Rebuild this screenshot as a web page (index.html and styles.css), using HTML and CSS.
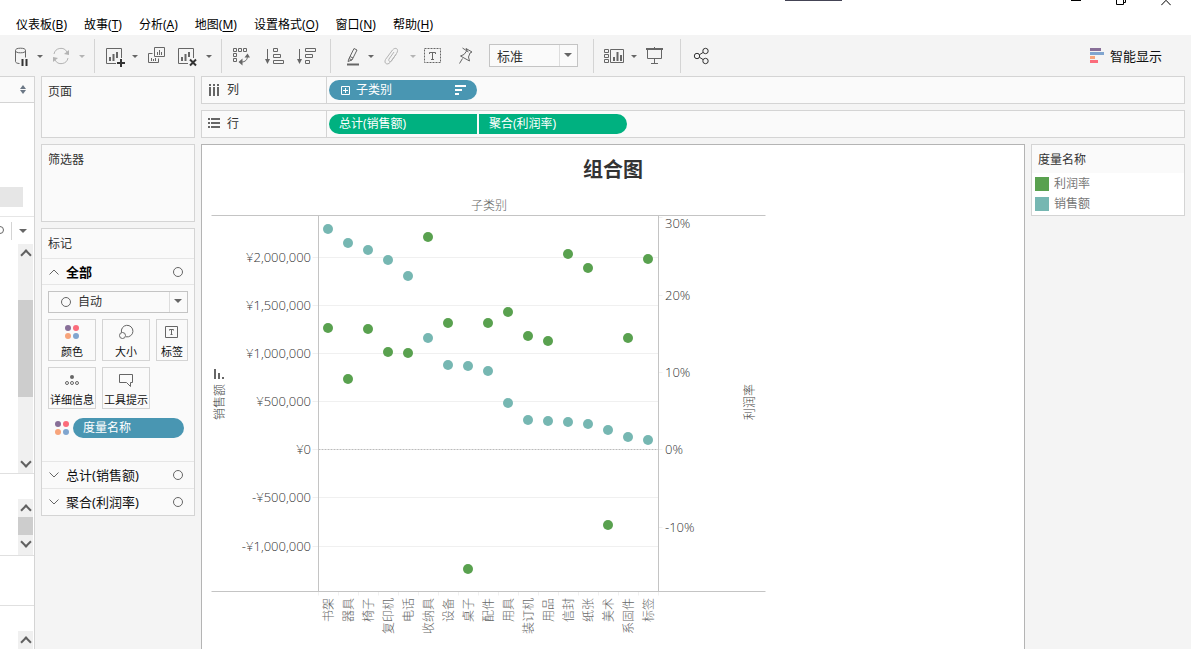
FILE: index.html
```html
<!DOCTYPE html>
<html lang="zh-CN">
	<head>
		<meta charset="UTF-8" />
		<meta name="viewport" content="width=device-width, initial-scale=1.0" />
		<title>组合图</title>
		<link rel="stylesheet" href="styles.css">
	</head>
	<body>
		<header class="titlebar">
			<span class="grip"></span>
			<div class="window-buttons">
				<button aria-label="最小化"><svg width="10" height="6"><path d="M0 .5h10" /></svg></button>
				<button aria-label="还原"><svg width="10" height="6"><path d="M.5 0v4.500h7V0M7.500 2.500h2V0" /></svg></button>
				<button aria-label="关闭"><svg width="10" height="6"><path d="M.3 5.200L5 .3l4.700 4.900" /></svg></button>
			</div>
		</header>
		<nav class="menu">
			<button>仪表板(<u>B</u>)</button>
			<button>故事(<u>T</u>)</button>
			<button>分析(<u>A</u>)</button>
			<button>地图(<u>M</u>)</button>
			<button>设置格式(<u>O</u>)</button>
			<button>窗口(<u>N</u>)</button>
			<button>帮助(<u>H</u>)</button>
		</nav>
		
		<div class="toolbar">
			<div class="group">
				<button class="tool" aria-label="数据源">
					<svg width="24" height="24" viewBox="0 0 24 24">
						<ellipse cx="13.500" cy="6.500" rx="5" ry="2.300" />
						<path d="M8.500 6.500v11c0 1.200 1.800 2 4 2M18.500 6.500v7" />
						<path class="bold" d="M15.500 15v7M19.500 15v7" />
					</svg>
				</button>
				<button class="caret" aria-label="更多"></button>
				<button class="tool" aria-label="刷新" disabled>
					<svg width="24" height="24" viewBox="0 0 24 24">
						<path d="M5 10a7 7 0 0 1 13-2M19 14a7 7 0 0 1-13 2" />
						<path class="solid" d="M20 6v5l-5-1zM4 18v-5l5 1z" />
					</svg>
				</button>
				<button class="caret" aria-label="更多" disabled></button>
			</div>
			<div class="group">
				<button class="tool" aria-label="新建工作表">
					<svg width="24" height="24" viewBox="0 0 24 24">
						<path d="M14 19.500H4.500v-15h15V14" />
						<path class="mid" d="M8 13v4M11.500 10v7M15 8v6" />
						<path class="bold" d="M19 15v8M15 19h8" />
					</svg>
				</button>
				<button class="caret" aria-label="更多"></button>
				<button class="tool" aria-label="复制">
					<svg width="24" height="24" viewBox="0 0 24 24">
						<path d="M10.500 3.500h10v9h-10zM8.500 9.500h-4v9h10v-4" />
						<path d="M13.500 8v3M15.500 6v5M17.500 8v3M7.500 14v3M9.500 15v2M11.500 14v3" />
					</svg>
				</button>
				<button class="tool" aria-label="清除工作表">
					<svg width="24" height="24" viewBox="0 0 24 24">
						<path d="M12 19.500H2.500v-15h15V14" />
						<path class="mid" d="M6 13v4M9.500 10v7M13 8v5" />
						<path class="bold" d="M14 15.500l6 6M20 15.500l-6 6" />
					</svg>
				</button>
				<button class="caret" aria-label="更多"></button>
			</div>
			<div class="group roomy">
				<button class="tool" aria-label="交换行和列">
					<svg width="24" height="24" viewBox="0 0 24 24">
						<path d="M4.500 4.500h3v3h-3zM9.500 4.500h3v3h-3zM14.500 4.500h3v3h-3zM4.500 9.500h3v3h-3zM4.500 14.500h3v3h-3zM18.500 12c0 4-2.500 6-6 6" />
						<path class="solid" d="M15.500 13.500l3-4 2.500 4zM13.500 14.500v7l-4-3.500z" />
					</svg>
				</button>
				<button class="tool" aria-label="升序">
					<svg width="24" height="24" viewBox="0 0 24 24">
						<path d="M6.500 5v13M12.500 4.500h4v3h-4zM12.500 10.500h7v3h-7zM12.500 16.500h10v3h-10z" />
						<path class="solid" d="M4 15h5l-2.500 5z" />
					</svg>
				</button>
				<button class="tool" aria-label="降序">
					<svg width="24" height="24" viewBox="0 0 24 24">
						<path d="M6.500 5v13M12.500 4.500h10v3h-10zM12.500 10.500h7v3h-7zM12.500 16.500h4v3h-4z" />
						<path class="solid" d="M4 15h5l-2.500 5z" />
					</svg>
				</button>
			</div>
			<div class="group roomy">
				<button class="tool" aria-label="突出显示">
					<svg width="24" height="24" viewBox="0 0 24 24">
						<path d="M16 4.500l3 1.500-5 10-3-1.500zM11 14.500l-1 3 4-1.500M12 12.500l3 1.500" />
						<path class="mid" d="M9 20.500h12" />
					</svg>
				</button>
				<button class="caret" aria-label="更多"></button>
				<button class="tool" aria-label="组成员" disabled>
					<svg width="24" height="24" viewBox="0 0 24 24">
						<path d="M14 8l-5 7c-1 2 1 3.500 2.500 2l5-7.500c3-4.500-1-7-4-3.500l-7 9.500c-2 4 2 6 4.500 3l6-8" />
					</svg>
				</button>
				<button class="caret" aria-label="更多" disabled></button>
				<button class="tool" aria-label="显示标记标签">
					<svg width="24" height="24" viewBox="0 0 24 24">
						<rect x="2.500" y="4.500" width="16" height="14" stroke-dasharray="2 1" />
						<path d="M7.500 10V8.500h6V10M10.500 8.500v7M9 15.500h3" />
					</svg>
				</button>
				<button class="tool" aria-label="固定轴">
					<svg width="24" height="24" viewBox="0 0 24 24">
						<path d="M8.500 4l6 4M12 4.500l6 3.500-2 1-1.500 4 1 4-9-5 3.500-1.500L13 6.500zM8.500 14.500l-3 5" />
					</svg>
				</button>
				<div class="picker fit">
					<select aria-label="适合">
						<option>标准</option>
						<option>整个视图</option>
					</select>
				</div>
			</div>
			<div class="group roomy">
				<button class="tool" aria-label="显示/隐藏卡">
					<svg width="24" height="24" viewBox="0 0 24 24">
						<path d="M3.500 5.500h4v3h-4zM3.500 10.500h4v3h-4zM3.500 15.500h4v3h-4zM9.500 5.500h13v13h-13z" />
						<path class="mid" d="M13 13v4M16.500 8v9M20 11v6" />
					</svg>
				</button>
				<button class="caret" aria-label="更多"></button>
				<button class="tool" aria-label="演示模式">
					<svg width="24" height="24" viewBox="0 0 24 24">
						<path d="M4.500 6v8.500h14V6M11.500 15v5M8 19.500h7M11.500 3v2" />
						<path class="mid" d="M3 5h17" />
					</svg>
				</button>
			</div>
			<div class="group">
				<button class="tool" aria-label="共享">
					<svg class="dark" width="24" height="24" viewBox="0 0 24 24">
						<circle cx="9" cy="12" r="2.700" />
						<circle cx="17.500" cy="7" r="2.700" />
						<circle cx="17.500" cy="17" r="2.700" />
						<path d="M11.500 10.700l3.500-2.200M11.500 13.300l3.500 2.200" />
					</svg>
				</button>
			</div>
			<button class="show-me">
				<svg width="14" height="15">
					<path fill="#886f98" d="M0 0h11v3H0z" />
					<path fill="#80a5cf" d="M0 4h14v3H0z" />
					<path fill="#f7a47b" d="M0 8h5v3H0z" />
					<path fill="#fb6c7b" d="M0 12h8v3H0z" />
				</svg>
				智能显示
			</button>
		</div>
		
		<div class="workspace">
			<aside class="data-pane">
				<div class="pane-head">
					<svg width="6" height="9"><path d="M0 4l3-4 3 4zM0 5l3 4 3-4z" /></svg>
				</div>
				<div class="connections"><span class="selected-item"></span></div>
				<div class="search">
					<svg width="4" height="10"><path d="M0 .5a3.500 3.500 0 0 1 0 7" /></svg>
					<button class="caret" aria-label="选项"></button>
				</div>
				<div class="list fields">
					<div class="scroll"><i class="up"></i><i class="thumb"></i><i class="down"></i></div>
				</div>
				<div class="list params">
					<div class="scroll"><i class="up"></i><i class="thumb"></i><i class="down"></i></div>
				</div>
				<div class="list blank"></div>
				<div class="list rest">
					<div class="scroll"><i class="up"></i><i class="thumb"></i></div>
				</div>
			</aside>
			
			<aside class="cards">
				<section class="card pages"><h2>页面</h2></section>
				<section class="card filters"><h2>筛选器</h2></section>
				<section class="card marks">
					<h2>标记</h2>
					<button class="mark-row open">
						<svg width="10" height="6"><path d="M.5 5.500L5 1l4.500 4.500" /></svg>
						<b>全部</b>
						<i class="ring"></i>
					</button>
					<div class="mark-body">
						<div class="picker mark-type">
							<i class="ring"></i>
							<select aria-label="标记类型">
								<option>自动</option>
								<option>圆</option>
							</select>
						</div>
						<div class="mark-buttons">
							<button>
								<svg width="20" height="20" viewBox="0 0 20 20" class="dots">
									<circle fill="#886f98" cx="6" cy="6" r="3" /><circle fill="#fb6c7b" cx="14" cy="6" r="3" />
									<circle fill="#f7a47b" cx="6" cy="14" r="3" /><circle fill="#80a5cf" cx="14" cy="14" r="3" />
								</svg>
								颜色
							</button>
							<button>
								<svg width="20" height="20" viewBox="0 0 20 20">
									<path d="M5.500 10.500a5.800 5.800 0 1 1 4.500 4.300" />
									<circle cx="6.500" cy="13.500" r="3" />
								</svg>
								大小
							</button>
							<button>
								<svg width="20" height="20" viewBox="0 0 20 20">
									<path d="M3.500 4.500h12v11h-12zM7.500 8.500v-1h4v1M9.500 7.500v5M8.500 12.500h2" />
								</svg>
								标签
							</button>
							<button>
								<svg width="20" height="20" viewBox="0 0 20 20">
									<circle class="solid" cx="10" cy="7" r="2" />
									<circle cx="5" cy="13" r="1.500" /><circle cx="10" cy="13" r="1.500" /><circle cx="15" cy="13" r="1.500" />
								</svg>
								详细信息
							</button>
							<button>
								<svg width="20" height="20" viewBox="0 0 20 20">
									<path d="M3.500 4.500h13v8h-2v4l-4-4h-7z" />
								</svg>
								工具提示
							</button>
						</div>
						<div class="mark-pill">
							<svg width="20" height="20" viewBox="0 0 20 20" class="dots">
								<circle fill="#886f98" cx="6" cy="6" r="3" /><circle fill="#fb6c7b" cx="14" cy="6" r="3" />
								<circle fill="#f7a47b" cx="6" cy="14" r="3" /><circle fill="#80a5cf" cx="14" cy="14" r="3" />
							</svg>
							<button class="pill blue">度量名称</button>
						</div>
					</div>
					<button class="mark-row">
						<svg width="10" height="6"><path d="M.5 .5L5 5 9.500 .5" /></svg>
						<span>总计(销售额)</span>
						<i class="ring"></i>
					</button>
					<button class="mark-row">
						<svg width="10" height="6"><path d="M.5 .5L5 5 9.500 .5" /></svg>
						<span>聚合(利润率)</span>
						<i class="ring"></i>
					</button>
				</section>
			</aside>
			
			<main>
				<div class="shelf">
					<div class="shelf-name">
						<svg width="12" height="12"><path d="M1 0h2v2H1zM5 0h2v2H5zM9 0h2v2H9zM1 3h2v9H1zM5 3h2v9H5zM9 3h2v9H9z" /></svg>
						列
					</div>
					<button class="pill blue">
						<svg width="9" height="9"><path d="M.5 .5h8v8h-8zM4.500 2v5M2 4.500h5" /></svg>
						子类别
						<svg class="sort" width="11" height="10"><path d="M0 1h11M0 5h7M0 9h4" /></svg>
					</button>
				</div>
				<div class="shelf">
					<div class="shelf-name">
						<svg width="12" height="12"><path d="M0 0h2v2H0zM0 4h2v2H0zM0 8h2v2H0zM3 0h9v2H3zM3 4h9v2H3zM3 8h9v2H3z" /></svg>
						行
					</div>
					<button class="pill green first">总计(销售额)</button>
					<button class="pill green last">聚合(利润率)</button>
				</div>
				<div class="view-row">
					<section class="view">
						<h1>组合图</h1>
						<svg id="chart" width="560" height="459" role="img" aria-label="组合图"></svg>
					</section>
					<section class="legend">
						<h2>度量名称</h2>
						<ul>
							<li class="profit">利润率</li>
							<li class="sales">销售额</li>
						</ul>
					</section>
				</div>
			</main>
		</div>
		
		<script>
			// sales in millions, profit ratio in percent
			const rows = [
				['书架', 2.29, 15.7],
				['器具', 2.14, 9.1],
				['椅子', 2.07, 15.5],
				['复印机', 1.97, 12.6],
				['电话', 1.80, 12.4],
				['收纳具', 1.16, 27.5],
				['设备', 0.88, 16.4],
				['桌子', 0.86, -15.5],
				['配件', 0.81, 16.4],
				['用具', 0.48, 17.7],
				['装订机', 0.30, 14.6],
				['用品', 0.29, 14.0],
				['信封', 0.28, 25.3],
				['纸张', 0.26, 23.5],
				['美术', 0.20, -9.8],
				['系固件', 0.13, 14.4],
				['标签', 0.10, 24.6]
			];
			const plot = { left: 107, right: 447, top: 25, bottom: 401, zero: 259, step: 20 };
			const salesY = v => Math.round(plot.zero + 0.3 - v * 96.3);
			const profitY = v => Math.round(plot.zero + 0.3 - v * 7.73);
			const chart = document.getElementById('chart');
			
			function add(tag, attrs, text) {
				const el = document.createElementNS('http://www.w3.org/2000/svg', tag);
				for (const key in attrs) {
					el.setAttribute(key, attrs[key]);
				}
				if (text) {
					el.textContent = text;
				}
				chart.appendChild(el);
			}
			
			function line(cls, x1, y1, x2, y2) {
				add('path', { class: cls, d: `M${x1 + 0.5} ${y1 + 0.5}L${x2 + 0.5} ${y2 + 0.5}` });
			}
			
			add('text', { x: 278, y: 20, 'text-anchor': 'middle' }, '子类别');
			
			[2, 1.5, 1, 0.5, 0, -0.5, -1].forEach(v => {
				const y = salesY(v);
				line('grid', plot.left - 6, y, v ? plot.right : plot.left, y);
				const label = (v < 0 ? '-' : '') + '¥' + Math.abs(v * 1000000).toLocaleString('en-US');
				add('text', { class: 'num', x: 100, y: y + 5, 'text-anchor': 'end' }, label);
			});
			[30, 20, 10, 0, -10].forEach(v => {
				const y = profitY(v);
				line('grid', plot.right, y, plot.right + 4, y);
				add('text', { class: 'num', x: 454, y: Math.max(y, 33) + 5 }, v + '%');
			});
			line('zero', plot.left, plot.zero, plot.right, plot.zero);
			
			rows.forEach(([name, sales, profit], i) => {
				const x = plot.left + 10 + i * plot.step;
				line('grid', x - 10, plot.bottom, x - 10, plot.bottom + 4);
				add('text', { class: 'cat', transform: `translate(${x + 5} 408) rotate(-90)`, 'text-anchor': 'end' }, name);
				add('circle', { class: 'sales', cx: x, cy: salesY(sales), r: 5 });
				add('circle', { class: 'profit', cx: x, cy: profitY(profit), r: 5 });
			});
			line('grid', plot.right, plot.bottom, plot.right, plot.bottom + 4);
			
			line('axis', 0, plot.top, 554, plot.top);
			line('axis', 0, plot.bottom, 554, plot.bottom);
			line('axis', plot.left, plot.top, plot.left, plot.bottom);
			line('axis', plot.right, plot.top, plot.right, plot.bottom);
			
			// axis titles
			add('path', { class: 'sort-mark', d: 'M3 179h2v10H3zM7 183h2v6H7zM11 187h2v2h-2z' });
			add('text', { class: 'axis-title', transform: 'translate(13 212) rotate(-90)', 'text-anchor': 'middle' }, '销售额');
			add('text', { class: 'axis-title', transform: 'translate(543 212) rotate(-90)', 'text-anchor': 'middle' }, '利润率');
		</script>
	</body>
</html>
```
FILE: styles.css
```css
* {
	box-sizing: border-box;
}
body {
	display: flex;
	flex-direction: column;
	height: 100vh;
	margin: 0;
	overflow: hidden;
	background: #f4f4f4;
	color: #333;
	font: 12px/16px "Noto Sans", "Noto Sans CJK SC", sans-serif;
}
button,
select {
	margin: 0;
	padding: 0;
	border: 0;
	background: none;
	color: inherit;
	font: inherit;
}
h1,
h2,
ul {
	margin: 0;
	padding: 0;
	font-weight: normal;
	list-style: none;
}
svg {
	display: block;
	flex: none;
	fill: none;
	stroke: #666;
}

/* title bar and menu */
.titlebar {
	display: flex;
	flex: none;
	height: 14px;
	padding-right: 20px;
	background: #fff;
}
.grip {
	width: 57px;
	height: 1px;
	margin-left: 67%;
	background: #445;
}
.window-buttons {
	display: flex;
	align-items: flex-start;
	gap: 35px;
	margin-left: auto;
}
.window-buttons svg {
	stroke: #000;
}
.menu {
	display: flex;
	flex: none;
	gap: 17px;
	height: 21px;
	padding: 3px 16px 2px;
	background: #fff;
	color: #000;
}
.menu button {
	height: 16px;
}
.menu u {
	text-underline-offset: 2px;
}

/* toolbar */
.toolbar {
	display: flex;
	flex: none;
	align-items: center;
	height: 41px;
}
.group {
	display: flex;
	align-items: center;
	gap: 4px;
	height: 34px;
	padding: 0 7px;
	border-right: 1px solid #d4d4d4;
}
.group.roomy {
	padding-right: 13px;
}
.group:nth-of-type(6) {
	border: 0;
}
.tool + .tool {
	margin-left: 4px;
}
.tool .mid {
	stroke-width: 2;
}
.tool .bold {
	stroke: #333;
	stroke-width: 2;
}
.solid {
	fill: #666;
	stroke: none;
}
.dark {
	stroke: #333;
}
.caret {
	width: 10px;
	height: 20px;
	padding-top: 2px;
}
.caret::before,
.picker::after {
	content: "";
	display: block;
	width: 0;
	margin: auto;
	border: 3px solid transparent;
	border-top-color: #666;
	border-bottom: 0;
}
button:disabled {
	opacity: 0.45;
}
.picker {
	position: relative;
	border: 1px solid #c4c4c4;
	background: #fafafa;
}
.picker select {
	display: block;
	width: 100%;
	height: 100%;
	appearance: none;
}
.picker::after {
	position: absolute;
	top: 2px;
	right: 5px;
	bottom: 0;
	height: 4px;
	border-width: 4px;
	border-bottom: 0;
}
.picker::before {
	content: "";
	position: absolute;
	top: 0;
	right: 17px;
	bottom: 0;
	border-left: 1px solid #ddd;
}
.fit {
	width: 89px;
	height: 23px;
	margin: 0 2px 0 7px;
	font-size: 13px;
}
.fit select {
	padding-left: 7px;
}
.show-me {
	display: flex;
	align-items: center;
	gap: 6px;
	margin-right: 29px;
	margin-left: auto;
	color: #111;
	font-size: 13px;
}
.show-me svg {
	stroke: none;
}

/* data pane */
.workspace {
	display: flex;
	flex: 1;
	gap: 6px;
	min-height: 0;
	padding-right: 6px;
}
.data-pane {
	flex: none;
	width: 35px;
	overflow: hidden;
	border-right: 1px solid #d4d4d4;
	background: #fff;
}
.pane-head {
	height: 27px;
	padding: 8px 8px 0 20px;
	border: solid #d4d4d4;
	border-width: 1px 0;
	background: #fafafa;
}
.pane-head svg {
	fill: #6b7785;
	stroke: none;
}
.connections {
	display: flex;
	align-items: flex-end;
	height: 114px;
	padding-bottom: 9px;
	border-bottom: 1px solid #e6e6e6;
}
.selected-item {
	width: 23px;
	height: 20px;
	background: #e6e6e6;
}
.search {
	display: flex;
	align-items: center;
	height: 27px;
}
.search .caret {
	width: 23px;
	height: 18px;
	margin-left: 7px;
	padding: 0;
	border-left: 1px solid #d4d4d4;
}
.search .caret::before {
	border-width: 4px;
	border-bottom: 0;
}
.list {
	display: flex;
	justify-content: flex-end;
	padding-right: 1px;
	border-bottom: 1px solid #e0e0e0;
}
.fields {
	height: 230px;
}
.params {
	height: 82px;
	padding-top: 25px;
}
.blank {
	height: 50px;
}
.rest {
	padding-top: 25px;
}
.scroll {
	display: flex;
	flex-direction: column;
	width: 15px;
	background: #f0f0f0;
}
.scroll .up,
.scroll .down {
	display: flex;
	align-items: center;
	justify-content: center;
	flex: none;
	height: 18px;
}
.scroll .up::before,
.scroll .down::before {
	content: "";
	width: 6px;
	height: 6px;
	border: solid #606060;
	border-width: 2px 0 0 2px;
	transform: translateY(2px) rotate(45deg);
}
.scroll .down::before {
	transform: translateY(-2px) rotate(225deg);
}
.thumb {
	height: 18px;
	background: #cdcdcd;
}
.fields .thumb {
	height: 97px;
	margin: 38px 0 auto;
}

/* cards */
.cards {
	display: flex;
	flex: none;
	flex-direction: column;
	gap: 6px;
	width: 154px;
}
.card {
	border: 1px solid #d4d4d4;
	background: #fafafa;
}
.card h2,
.legend h2 {
	padding: 7px 6px 5px;
	font-size: 12px;
}
.pages {
	height: 62px;
}
.filters {
	height: 78px;
}
.marks h2 {
	height: 29px;
}
.mark-row {
	display: flex;
	align-items: center;
	gap: 7px;
	width: 100%;
	height: 27px;
	padding: 0 11px 0 7px;
	border-top: 1px solid #e6e6e6;
	color: #111;
	font-size: 13px;
}
.mark-row b {
	color: #000;
}
.mark-row.open {
	border-bottom: 1px solid #e6e6e6;
}
.ring {
	width: 10px;
	height: 10px;
	border: 1px solid #666;
	border-radius: 50%;
}
.mark-row .ring {
	margin-left: auto;
}
.mark-body {
	padding: 6px 6px 23px;
}
.mark-type {
	height: 22px;
	margin-bottom: 6px;
}
.mark-type .ring {
	position: absolute;
	top: 5px;
	left: 12px;
}
.mark-type select {
	padding-left: 29px;
}
.mark-buttons {
	display: grid;
	grid-template-columns: 48px 48px 32px;
	gap: 6px;
}
.mark-buttons button {
	display: flex;
	flex-direction: column;
	align-items: center;
	height: 42px;
	padding-top: 2px;
	border: 1px solid #d4d4d4;
	color: #111;
	font-size: 11px;
	line-height: 20px;
	white-space: nowrap;
}
.dots {
	stroke: none;
}
.mark-pill {
	display: flex;
	gap: 1px;
	margin-top: 9px;
	padding: 0 4px;
}
.mark-pill .pill {
	flex: 1;
}
.pill {
	display: flex;
	align-items: center;
	gap: 6px;
	width: 148px;
	height: 20px;
	padding: 0 10px;
	border-radius: 10px;
	color: #fff;
}
.pill svg {
	stroke: #fff;
}
.blue {
	background: #4996b2;
}
.green {
	background: #00b180;
}
.first {
	border-radius: 10px 0 0 10px;
}
.last {
	border-radius: 0 10px 10px 0;
}

/* shelves */
main {
	display: flex;
	flex: 1;
	flex-direction: column;
	gap: 6px;
	min-width: 0;
}
.shelf {
	display: flex;
	flex: none;
	align-items: center;
	gap: 2px;
	height: 28px;
	border: 1px solid #d4d4d4;
	background: #fafafa;
}
.shelf .blue {
	padding-left: 12px;
}
.pill .sort {
	margin-right: 1px;
	margin-left: auto;
	stroke-width: 2;
}
.shelf-name {
	display: flex;
	align-items: center;
	gap: 7px;
	width: 125px;
	height: 100%;
	padding-left: 6px;
	border-right: 1px solid #d4d4d4;
}
.shelf-name svg {
	fill: #666;
	stroke: none;
}

/* view */
.view-row {
	display: flex;
	flex: 1;
	gap: 6px;
	min-height: 0;
}
.view {
	flex: 1;
	padding: 10px 9px 0;
	overflow: hidden;
	border: 1px solid #b4b4b4;
	border-bottom: 0;
	background: #fff;
}
.view h1 {
	margin-bottom: 5px;
	font-size: 20px;
	font-weight: bold;
	line-height: 30px;
	text-align: center;
}
.legend {
	align-self: flex-start;
	width: 154px;
	border: 1px solid #d4d4d4;
	background: #fff;
}
.legend h2 {
	background: #fafafa;
}
.legend ul {
	padding: 1px 3px;
}
.legend li {
	display: flex;
	align-items: center;
	gap: 5px;
	height: 20px;
	color: #777;
}
.legend li::before {
	content: "";
	width: 14px;
	height: 14px;
	background: #59a14f;
}
.legend .sales::before {
	background: #76b7b2;
}

/* chart */
#chart text {
	fill: #666;
	stroke: none;
	font-weight: 300;
}
#chart .num {
	fill: #333;
	font-family: "Open Sans", "Noto Sans", sans-serif;
	font-size: 13px;
}
#chart .axis-title {
	fill: #444;
}
.grid {
	stroke: #f0f0f0;
}
.axis {
	stroke: #c4c4c4;
}
.zero {
	stroke: #bbb;
	stroke-dasharray: 2 1;
}
circle.sales {
	fill: #76b7b2;
	stroke: none;
}
circle.profit {
	fill: #59a14f;
	stroke: none;
}
.sort-mark {
	fill: #666;
	stroke: none;
}
```
